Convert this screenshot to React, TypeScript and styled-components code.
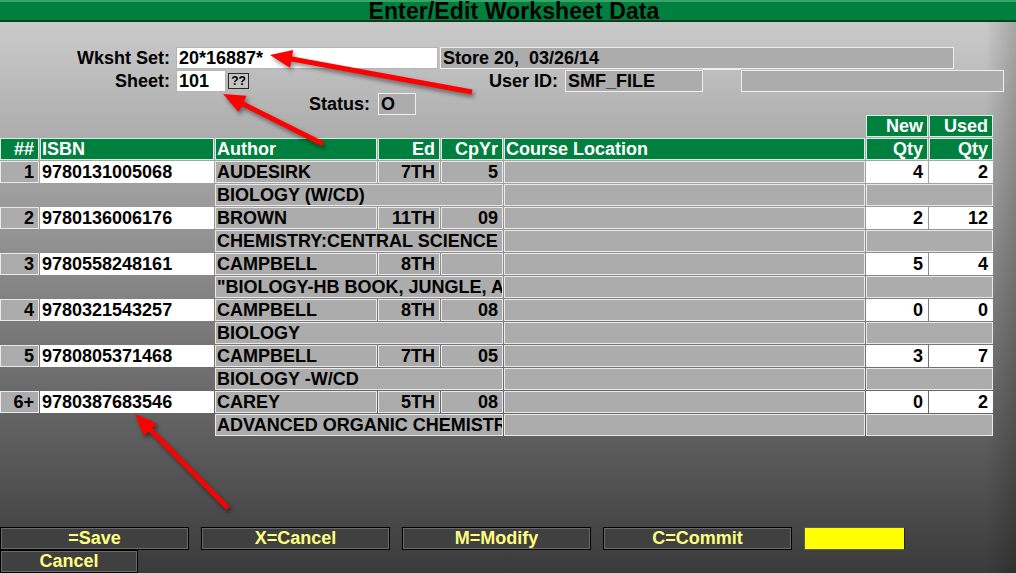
import React from "react";
import styled, { createGlobalStyle, css } from "styled-components";

const GlobalStyle = createGlobalStyle`
  html, body {
    margin: 0;
    padding: 0;
  }
  body {
    font-family: "Liberation Sans", Arial, sans-serif;
  }
`;

const records = [
  { no: "1", isbn: "9780131005068", author: "AUDESIRK", ed: "7TH", year: "5", title: "BIOLOGY (W/CD)", newQty: "4", usedQty: "2" },
  { no: "2", isbn: "9780136006176", author: "BROWN", ed: "11TH", year: "09", title: "CHEMISTRY:CENTRAL SCIENCE", newQty: "2", usedQty: "12" },
  { no: "3", isbn: "9780558248161", author: "CAMPBELL", ed: "8TH", year: "", title: "\"BIOLOGY-HB BOOK, JUNGLE, ABC", newQty: "5", usedQty: "4" },
  { no: "4", isbn: "9780321543257", author: "CAMPBELL", ed: "8TH", year: "08", title: "BIOLOGY", newQty: "0", usedQty: "0" },
  { no: "5", isbn: "9780805371468", author: "CAMPBELL", ed: "7TH", year: "05", title: "BIOLOGY -W/CD", newQty: "3", usedQty: "7" },
  { no: "6+", isbn: "9780387683546", author: "CAREY", ed: "5TH", year: "08", title: "ADVANCED ORGANIC CHEMISTRY", newQty: "0", usedQty: "2" },
];

const actions = ["=Save", "X=Cancel", "M=Modify", "C=Commit"];

// annotation arrows: tail -> tip
const arrows = [
  { x1: 472, y1: 92, x2: 270, y2: 55 },
  { x1: 323, y1: 144, x2: 223, y2: 94 },
  { x1: 228, y1: 508, x2: 135, y2: 414 },
];

function Arrow({ x1, y1, x2, y2 }: { x1: number; y1: number; x2: number; y2: number }) {
  const len = Math.hypot(x2 - x1, y2 - y1);
  const dx = (x2 - x1) / len;
  const dy = (y2 - y1) / len;
  const head = 22;
  const half = 9;
  const bx = x2 - dx * head;
  const by = y2 - dy * head;
  const pts = `${x2},${y2} ${bx - dy * half},${by + dx * half} ${bx + dy * half},${by - dx * half}`;
  return (
    <g>
      <line x1={x1} y1={y1} x2={bx + dx * 4} y2={by + dy * 4} stroke="#ff0000" strokeWidth={5} />
      <polygon points={pts} fill="#ff0000" />
    </g>
  );
}

export default function App() {
  return (
    <>
      <GlobalStyle />
      <Screen>
        <TitleBar>Enter/Edit Worksheet Data</TitleBar>

        <Form>
          <FormRow>
            <Label $w={170}>Wksht Set:</Label>
            <Field $w={262} $ml={6} $white>20*16887*</Field>
            <Field $w={514} $ml={2}>Store 20,  03/26/14</Field>
          </FormRow>
          <FormRow>
            <Label $w={170}>Sheet:</Label>
            <Field $w={50} $ml={6} $white>101</Field>
            <HelpButton>??</HelpButton>
            <Label $w={309}>User ID:</Label>
            <Field $w={138} $ml={7}>SMF_FILE</Field>
            <Notch />
            <Field $w={263} />
          </FormRow>
          <FormRow>
            <Label $w={370}>Status:</Label>
            <Field $w={38} $ml={8}>O</Field>
          </FormRow>
        </Form>

        <Grid>
          <Blank $span={6} />
          <Cell $tone="green" $right>New</Cell>
          <Cell $tone="green" $right>Used</Cell>

          <Cell $tone="green" $right>##</Cell>
          <Cell $tone="green">ISBN</Cell>
          <Cell $tone="green">Author</Cell>
          <Cell $tone="green" $right>Ed</Cell>
          <Cell $tone="green" $right>CpYr</Cell>
          <Cell $tone="green">Course Location</Cell>
          <Cell $tone="green" $right>Qty</Cell>
          <Cell $tone="green" $right>Qty</Cell>

          {records.map((r) => (
            <React.Fragment key={r.isbn}>
              <Cell $right>{r.no}</Cell>
              <Cell $tone="white" $flat>{r.isbn}</Cell>
              <Cell>{r.author}</Cell>
              <Cell $right>{r.ed}</Cell>
              <Cell $right>{r.year}</Cell>
              <Cell />
              <Cell $tone="white" $right $flat>{r.newQty}</Cell>
              <Cell $tone="white" $right $flat>{r.usedQty}</Cell>

              <Blank $span={2} />
              <Cell $span={3}>{r.title}</Cell>
              <Cell />
              <Cell $span={2} />
            </React.Fragment>
          ))}
        </Grid>

        <Footer>
          <ButtonRow>
            {actions.map((a) => (
              <ActionButton key={a}>{a}</ActionButton>
            ))}
            <Indicator />
          </ButtonRow>
          <ButtonRow>
            <ActionButton $w={138}>Cancel</ActionButton>
          </ButtonRow>
        </Footer>

        <Overlay width={1016} height={573}>
          {arrows.map((a, i) => (
            <Arrow key={i} {...a} />
          ))}
        </Overlay>
      </Screen>
    </>
  );
}

const Screen = styled.div`
  position: relative;
  width: 1016px;
  height: 573px;
  overflow: hidden;
  display: flex;
  flex-direction: column;
  background: linear-gradient(to right, rgba(0, 0, 0, 0) 97%, rgba(0, 0, 0, 0.18)),
    linear-gradient(#cdcdcd 0px, #c6c6c6 40px, #3a3a3a 573px);
  font-weight: bold;
  font-size: 18px;
  color: #000;
`;

const TitleBar = styled.div`
  box-sizing: border-box;
  height: 22px;
  background: #00803f;
  border-top: 2px solid #3aa366;
  border-bottom: 2px solid #00421f;
  text-align: center;
  font-size: 23px;
  line-height: 19px;
  padding-left: 12px;
  letter-spacing: 0.1px;
`;

const Form = styled.div`
  display: flex;
  flex-direction: column;
  gap: 1px;
  padding-top: 25px;
`;

const FormRow = styled.div`
  display: flex;
  align-items: center;
  height: 22px;
`;

const Label = styled.span<{ $w: number }>`
  flex-shrink: 0;
  width: ${({ $w }) => $w}px;
  text-align: right;
  white-space: nowrap;
  line-height: 22px;
`;

const Field = styled.div<{ $w: number; $ml?: number; $white?: boolean }>`
  box-sizing: border-box;
  flex-shrink: 0;
  width: ${({ $w }) => $w}px;
  height: 22px;
  margin-left: ${({ $ml }) => $ml ?? 0}px;
  padding-left: 2px;
  line-height: 20px;
  white-space: pre;
  overflow: hidden;
  ${({ $white }) =>
    $white
      ? css`
          background: #fff;
          border: 1px solid #b4b4b4;
        `
      : css`
          background: #acacac;
          border: 1px solid #efefef;
        `}
`;

const HelpButton = styled.div`
  box-sizing: border-box;
  flex-shrink: 0;
  width: 21px;
  height: 16px;
  margin-left: 2px;
  background: #c4c4c4;
  border: 1px solid #2a2a2a;
  font-size: 12px;
  line-height: 14px;
  text-align: center;
`;

const Notch = styled.div`
  align-self: flex-start;
  width: 38px;
  height: 1px;
  margin-top: -1px;
  background: #eeeeee;
`;

const Grid = styled.div`
  display: grid;
  grid-template-columns: 39px 174px 162px 62px 62px 361px 62px 64px;
  grid-auto-rows: 22px;
  gap: 1px;
`;

const Blank = styled.div<{ $span: number }>`
  grid-column: span ${({ $span }) => $span};
`;

const tones = {
  green: css`
    background: #00803f;
    border: 1px solid #dcebe2;
    color: #fff;
  `,
  gray: css`
    background: #acacac;
    border: 1px solid #e9e9e9;
  `,
  white: css`
    background: #fff;
    border: 1px solid #fff;
  `,
};

const Cell = styled.div<{ $tone?: "green" | "gray" | "white"; $right?: boolean; $span?: number; $flat?: boolean }>`
  box-sizing: border-box;
  grid-column: span ${({ $span }) => $span ?? 1};
  ${({ $tone }) => tones[$tone ?? "gray"]}
  ${({ $flat }) => $flat && "border-color: #fff;"}
  line-height: 20px;
  padding: 0 ${({ $right }) => ($right ? "4px" : "1px")};
  text-align: ${({ $right }) => ($right ? "right" : "left")};
  white-space: nowrap;
  overflow: hidden;
`;

const Footer = styled.div`
  margin-top: auto;
  display: flex;
  flex-direction: column;
`;

const ButtonRow = styled.div`
  display: flex;
  gap: 12px;
`;

const ActionButton = styled.div<{ $w?: number }>`
  box-sizing: border-box;
  width: ${({ $w }) => $w ?? 189}px;
  height: 23px;
  background: #404040;
  border: 1px solid #000;
  box-shadow: inset 0 0 0 1px #6a6a6a;
  color: #ffff80;
  text-align: center;
  line-height: 21px;
`;

const Indicator = styled.div`
  box-sizing: border-box;
  width: 101px;
  height: 23px;
  background: #ffff00;
  border: 1px solid #5a5a5a;
  border-right-color: #202020;
`;

const Overlay = styled.svg`
  position: absolute;
  top: 0;
  left: 0;
  pointer-events: none;
  filter: drop-shadow(2px 3px 2px rgba(0, 0, 0, 0.45));
`;
